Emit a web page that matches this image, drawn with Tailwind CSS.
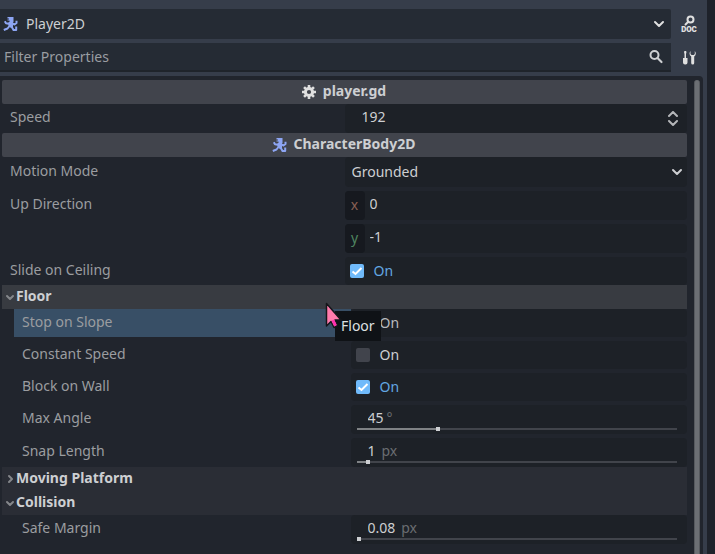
<!DOCTYPE html>
<html lang="en">
<head>
  <meta charset="UTF-8" />
  <meta name="viewport" content="width=device-width, initial-scale=1.0" />
  <title>Inspector - Player2D</title>
  <script src="https://cdn.jsdelivr.net/npm/@tailwindcss/browser@4"></script>
</head>
<body class="min-h-screen bg-[#363d4a] font-['Noto_Sans',sans-serif] text-sm leading-5 text-[#cdcfd2]">

  <!-- shared icons -->
  <svg class="hidden">
    <symbol id="icon-runner" viewBox="0 0 16 16">
      <path fill="#8da5f3" d="M4.500 1H10.500V6H6.500V4.500H4.500V3.500H6V2.500H4.500z" />
      <path fill="#8da5f3" d="M5.500 6H10v5L8 12 5.500 10z" />
      <g fill="none" stroke="#8da5f3" stroke-width="2" stroke-linejoin="round">
        <path d="M7 8L3 7.200 1.800 5.200" />
        <path d="M9 7.200l2.500 1.300 2-1.500V4.800" />
        <path d="M6.500 10L4.500 12.500 0.800 14" />
        <path d="M8.500 10.500L10.500 14H13.200V10.500" />
      </g>
    </symbol>
    <symbol id="icon-gear" viewBox="0 0 16 16">
      <circle cx="8" cy="8" r="3.600" fill="none" stroke="#e0e0e0" stroke-width="3" />
      <path stroke="#e0e0e0" stroke-width="2.600" d="M8 1v3M8 12v3M1 8h3M12 8h3M3.050 3.050l2 2M10.950 10.950l2 2M12.950 3.050l-2 2M5.050 10.950l-2 2" />
    </symbol>
    <symbol id="icon-down" viewBox="0 0 12 12">
      <path fill="none" stroke="currentColor" stroke-width="2" stroke-linecap="round" stroke-linejoin="round" d="M2 4l4 4 4-4" />
    </symbol>
    <symbol id="icon-fold" viewBox="0 0 12 12">
      <path fill="none" stroke="currentColor" stroke-width="2" stroke-linecap="round" stroke-linejoin="round" d="M3 5l3 3 3-3" />
    </symbol>
  </svg>

  <div class="flex h-screen overflow-hidden">
    <div class="flex min-w-0 flex-1 flex-col pt-[9px]">

      <!-- object picker -->
      <div class="mb-1 flex h-[30px]">
        <button class="flex flex-1 items-center rounded-r-xs bg-[#252b34] pr-[6px] pl-[3px]">
          <svg class="size-4"><use href="#icon-runner" /></svg>
          <span class="ml-[7px] flex-1 text-left">Player2D</span>
          <svg class="size-3 text-[#e0e0e0]"><use href="#icon-down" /></svg>
        </button>
        <button class="flex w-9 flex-col items-center pt-[6px] text-[#e0e0e0]" aria-label="Open documentation">
          <svg class="h-[11px] w-4" viewBox="0 0 16 11">
            <circle cx="9.500" cy="4.500" r="3" fill="none" stroke="currentColor" stroke-width="2" />
            <path stroke="currentColor" stroke-width="2" stroke-linecap="round" d="M7 7L4.500 9.500" />
          </svg>
          <span class="font-['Inter',sans-serif] text-[7px] leading-[7px] font-black">DOC</span>
        </button>
      </div>

      <!-- filter -->
      <div class="mb-1 flex h-[29px]">
        <label class="flex flex-1 items-center border-b-2 border-[#1f242b] bg-[#252b34] pr-[7px] pl-1">
          <input type="text" aria-label="Filter Properties" placeholder="Filter Properties" class="min-w-0 flex-1 outline-none placeholder:text-[#9a9da2]" />
          <svg class="size-4 text-[#cdcfd2]" viewBox="0 0 16 16">
            <circle cx="6.500" cy="6" r="4" fill="none" stroke="currentColor" stroke-width="2" />
            <path stroke="currentColor" stroke-width="2.200" stroke-linecap="round" d="M9.500 9L13.500 13" />
          </svg>
        </label>
        <button class="flex w-9 items-center justify-center text-[#e0e0e0]" aria-label="Manage object properties">
          <svg class="size-4" viewBox="0 0 16 16" fill="currentColor">
            <path d="M3.500 1h1.500l.5 1-.5 2v4h1.500v4.500a2 2 0 0 1-2 2h-.5a2 2 0 0 1-2-2V8H3.500V4L3 2z" />
            <path d="M9.500 1a3.800 3.800 0 0 0-1 2.500A3.800 3.800 0 0 0 10.200 6.500V13a1.500 1.500 0 0 0 3 0V6.500A3.800 3.800 0 0 0 14.800 3.500 3.800 3.800 0 0 0 13.800 1v3L12.800 5h-2.200L9.500 4z" />
          </svg>
        </button>
      </div>

      <!-- inspector -->
      <div class="mr-1 flex min-h-0 flex-1 rounded-tr-sm bg-[#21252d] pt-1 pr-[3px] pl-[2px]">
        <div class="min-w-0 flex-1 text-[#9b9da0]">

          <div class="flex h-6 items-center justify-center gap-[6px] rounded-xs bg-[#41444c] pr-[2px] font-bold text-[#cdcfd2]">
            <svg class="size-4"><use href="#icon-gear" /></svg>
            <h2 class="pb-[2px]">player.gd</h2>
          </div>
          <div class="grid h-[29px] grid-cols-2">
            <label for="speed" class="pt-[3px] pl-2">Speed</label>
            <div class="flex items-center rounded-sm bg-[#1d2127] pr-2 pl-[17px] text-[#cdcfd2]">
              <input id="speed" type="text" value="192" class="min-w-0 flex-1 pb-[3px] outline-none" />
              <svg class="h-4 w-3" viewBox="0 0 12 16" fill="none" stroke="#b4b6b9" stroke-width="2" stroke-linecap="round" stroke-linejoin="round">
                <path d="M2 5l4-4 4 4M2 10l4 4 4-4" />
              </svg>
            </div>
          </div>

          <div class="flex h-6 items-center justify-center gap-[6px] rounded-xs bg-[#41444c] pr-[2px] font-bold text-[#cdcfd2]">
            <svg class="size-4"><use href="#icon-runner" /></svg>
            <h2 class="pb-[2px]">CharacterBody2D</h2>
          </div>
          <div class="flex flex-col gap-1">
            <div class="grid h-[30px] grid-cols-2">
              <label for="motion" class="pt-1 pl-2">Motion Mode</label>
              <div class="relative rounded-sm bg-[#1d2127] text-[#cdcfd2]">
                <select id="motion" class="h-full w-full appearance-none pr-6 pl-[7px] outline-none">
                  <option>Grounded</option>
                  <option>Floating</option>
                </select>
                <svg class="pointer-events-none absolute top-[9px] right-1 size-3"><use href="#icon-down" /></svg>
              </div>
            </div>
            <div class="grid grid-cols-2">
              <span class="pt-[3px] pl-2">Up Direction</span>
              <div class="flex flex-col gap-1 text-[#cdcfd2]">
                <label class="flex h-[29px] items-center rounded-sm bg-[#1d2127]">
                  <span class="flex h-full w-5 items-center justify-center rounded-sm bg-[#16191f] pb-[2px] text-[#8a6054]">x</span>
                  <input type="text" value="0" class="min-w-0 flex-1 pb-[3px] pl-[5px] outline-none" />
                </label>
                <label class="flex h-[29px] items-center rounded-sm bg-[#1d2127]">
                  <span class="flex h-full w-5 items-center justify-center rounded-sm bg-[#16191f] pb-[2px] text-[#4f8560]">y</span>
                  <input type="text" value="-1" class="min-w-0 flex-1 pb-[3px] pl-[5px] outline-none" />
                </label>
              </div>
            </div>
            <div class="grid h-7 grid-cols-2">
              <label for="ceiling" class="pt-[3px] pl-2">Slide on Ceiling</label>
              <label class="flex items-center gap-[10px] rounded-sm bg-[#1d2127] pl-[5px] text-[#62a7e2]">
                <span class="relative size-[14px]">
                  <input id="ceiling" type="checkbox" checked class="block size-[14px] appearance-none rounded-xs bg-[#41444c] checked:bg-[#70bafa]" />
                  <svg class="pointer-events-none absolute inset-0 size-[14px]" viewBox="0 0 14 14"><path fill="none" stroke="#fff" stroke-width="2" d="M2.500 7.500L5.500 10l6-6" /></svg>
                </span>
                On
              </label>
            </div>
          </div>

          <!-- Floor section -->
          <div class="relative">
            <button class="flex h-6 w-full items-center bg-[#383b41] pl-[2px] font-bold text-[#cdcfd2]">
              <svg class="size-3 text-[#85878b]"><use href="#icon-fold" /></svg>
              <span class="pb-[2px]">Floor</span>
            </button>
            <!-- tooltip and pointer -->
            <div class="absolute top-[26px] left-[333px] z-10 bg-[#0f1216] px-[6px] py-[5px] text-[#dfe0e1]">Floor</div>
            <svg class="absolute top-[17px] left-[323px] z-20 h-[28px] w-[18px]" viewBox="0 0 18 28">
              <path fill="#ff7bac" stroke="#14161a" stroke-width="1.500" stroke-linejoin="round" d="M1.500 1.500v22.500l4.500-4.500 3 6 3.500-2-2.500-5.500h6z" />
              <path fill="#ff2fb0" d="M6.500 18.800l2.700-1.300 2.600 5.500-2.500 1.500z" />
            </svg>
          </div>
          <div class="flex flex-col gap-1 pl-3">
            <div class="grid h-7 grid-cols-2">
              <label for="slope" class="bg-[#384f66] pt-[3px] pl-2">Stop on Slope</label>
              <label class="flex items-center gap-[10px] rounded-sm bg-[#1d2127] pl-[5px] text-[#b9bbbe]">
                <input id="slope" type="checkbox" class="size-[14px] appearance-none rounded-xs bg-[#41444c] checked:bg-[#70bafa]" />
                On
              </label>
            </div>
            <div class="grid h-7 grid-cols-2">
              <label for="constant" class="pt-[3px] pl-2">Constant Speed</label>
              <label class="flex items-center gap-[10px] rounded-sm bg-[#1d2127] pl-[5px] text-[#cdcfd2]">
                <input id="constant" type="checkbox" class="size-[14px] appearance-none rounded-xs bg-[#41444c] checked:bg-[#70bafa]" />
                On
              </label>
            </div>
            <div class="grid h-7 grid-cols-2">
              <label for="wall" class="pt-[3px] pl-2">Block on Wall</label>
              <label class="flex items-center gap-[10px] rounded-sm bg-[#1d2127] pl-[5px] text-[#62a7e2]">
                <span class="relative size-[14px]">
                  <input id="wall" type="checkbox" checked class="block size-[14px] appearance-none rounded-xs bg-[#41444c] checked:bg-[#70bafa]" />
                  <svg class="pointer-events-none absolute inset-0 size-[14px]" viewBox="0 0 14 14"><path fill="none" stroke="#fff" stroke-width="2" d="M2.500 7.500L5.500 10l6-6" /></svg>
                </span>
                On
              </label>
            </div>
            <div class="grid h-[29px] grid-cols-2">
              <label for="angle" class="pt-[3px] pl-2">Max Angle</label>
              <div class="flex flex-col justify-between rounded-sm bg-[#1d2127] pt-[3px] pr-[10px] pb-[3px] pl-[6px]">
                <div class="flex h-5 shrink-0 gap-[3px] pl-[11px]">
                  <input id="angle" type="text" value="45" class="field-sizing-content text-[#cdcfd2] outline-none" />
                  <span class="text-[#6a6d71]">°</span>
                </div>
                <input type="range" aria-label="Max Angle" min="0" max="180" value="45" class="-mt-1 block h-1 w-full appearance-none bg-[length:100%_2px] bg-center bg-no-repeat [&::-webkit-slider-thumb]:size-1 [&::-webkit-slider-thumb]:appearance-none [&::-webkit-slider-thumb]:bg-[#cdcfd2]" />
              </div>
            </div>
            <div class="grid h-[29px] grid-cols-2">
              <label for="snap" class="pt-[3px] pl-2">Snap Length</label>
              <div class="flex flex-col justify-between rounded-sm bg-[#1d2127] pt-[3px] pr-[10px] pb-[3px] pl-[6px]">
                <div class="flex h-5 shrink-0 gap-[6px] pl-[11px]">
                  <input id="snap" type="text" value="1" class="field-sizing-content text-[#cdcfd2] outline-none" />
                  <span class="text-[#6a6d71]">px</span>
                </div>
                <input type="range" aria-label="Snap Length" min="0" max="32" value="1" class="-mt-1 block h-1 w-full appearance-none bg-[length:100%_2px] bg-center bg-no-repeat [&::-webkit-slider-thumb]:size-1 [&::-webkit-slider-thumb]:appearance-none [&::-webkit-slider-thumb]:bg-[#cdcfd2]" />
              </div>
            </div>
          </div>

          <button class="flex h-6 w-full items-center bg-[#2a2d35] pl-[2px] font-bold text-[#cdcfd2]">
            <svg class="size-3 -rotate-90 text-[#85878b]"><use href="#icon-fold" /></svg>
            <span class="pb-[2px]">Moving Platform</span>
          </button>

          <!-- Collision section -->
          <button class="flex h-6 w-full items-center bg-[#2a2d35] pl-[2px] font-bold text-[#cdcfd2]">
            <svg class="size-3 text-[#85878b]"><use href="#icon-fold" /></svg>
            <span class="pb-[2px]">Collision</span>
          </button>
          <div class="pl-3">
            <div class="grid h-[29px] grid-cols-2">
              <label for="margin" class="pt-[3px] pl-2">Safe Margin</label>
              <div class="flex flex-col justify-between rounded-sm bg-[#1d2127] pt-[3px] pr-[10px] pb-[3px] pl-[6px]">
                <div class="flex h-5 shrink-0 gap-[6px] pl-[11px]">
                  <input id="margin" type="text" value="0.08" class="field-sizing-content text-[#cdcfd2] outline-none" />
                  <span class="text-[#6a6d71]">px</span>
                </div>
                <input type="range" aria-label="Safe Margin" min="0" max="32" step="0.01" value="0.08" class="-mt-1 block h-1 w-full appearance-none bg-[length:100%_2px] bg-center bg-no-repeat [&::-webkit-slider-thumb]:size-1 [&::-webkit-slider-thumb]:appearance-none [&::-webkit-slider-thumb]:bg-[#cdcfd2]" />
              </div>
            </div>
          </div>
        </div>

        <!-- scrollbar -->
        <div class="ml-[7px] w-[6px] rounded-t-full border-x border-[#56595e] bg-[#6c6f74]"></div>
      </div>
    </div>

    <div class="w-2 bg-[#1e222a]"></div>
  </div>

  <script>
    // paint the filled part of each slider track
    function paintSlider(slider) {
      const percent = (slider.value - slider.min) / (slider.max - slider.min) * 100;
      slider.style.backgroundImage = `linear-gradient(to right, #7f8285 ${percent}%, #41444b ${percent}%)`;
    }

    document.querySelectorAll('input[type="range"]').forEach(slider => {
      paintSlider(slider);
      slider.addEventListener("input", () => paintSlider(slider));
    });
  </script>
</body>
</html>
